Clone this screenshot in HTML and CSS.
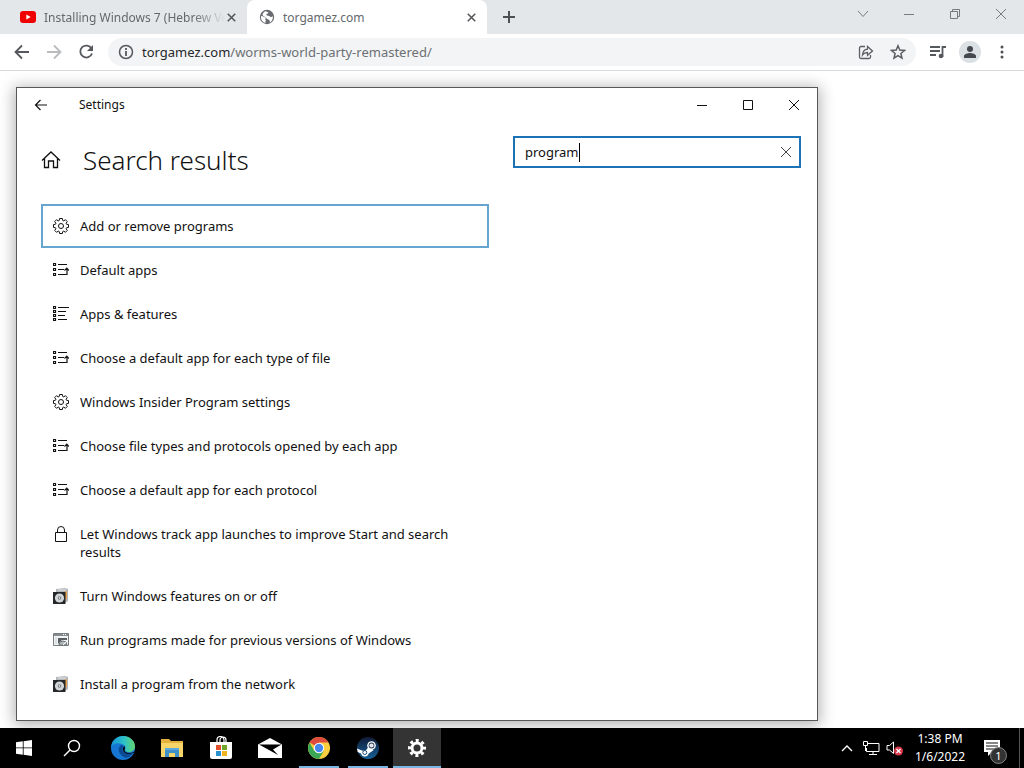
FILE: index.html
```html
<!DOCTYPE html>
<html lang="en">
<head>
<meta charset="utf-8">
<meta name="viewport" content="width=device-width, initial-scale=1">
<title>Settings</title>
<link rel="stylesheet" href="styles.css">
</head>
<body>
<svg class="symbols" aria-hidden="true">
  <symbol id="x" viewBox="0 0 12 12"><path d="M1 1l10 10M11 1L1 11" fill="none" stroke="currentColor"/></symbol>
  <symbol id="gear" viewBox="0 0 16 16"><g fill="none" stroke="currentColor"><path d="M6.600.5h2.800l.3 1.900 1.100.5 1.600-1.200 1.900 1.900-1.200 1.600.5 1.100 1.900.3v2.800l-1.900.3-.5 1.100 1.200 1.600-1.900 1.900-1.600-1.200-1.100.5-.3 1.900H6.600l-.3-1.900-1.100-.5-1.600 1.200-1.900-1.900 1.200-1.600-.5-1.100L.5 9.400V6.600l1.900-.3.5-1.100-1.200-1.600 1.900-1.900 1.600 1.200 1.100-.5z"/><circle cx="8" cy="8" r="2.500"/></g></symbol>
  <symbol id="defaults" viewBox="0 0 16 16"><path d="M.5 1.500h2v2h-2zM.5 6.500h2v2h-2zM.5 11.500h2v2h-2zM5 2.500h9M5 7.500h6M5 12.500h6M11 12.500h3v-6M11.500 8.500l2.300-2.300L16 8.500" fill="none" stroke="currentColor" stroke-width="1.200"/></symbol>
  <symbol id="apps" viewBox="0 0 16 16"><path d="M.5.5h2v2h-2zM.5 4.500h2v2h-2zM.5 8.500h2v2h-2zM.5 12.500h2v2h-2zM5 1.500h11M5 5.500h8M5 9.500h7M5 13.500h9" fill="none" stroke="currentColor" stroke-width="1.200"/></symbol>
  <symbol id="lock" viewBox="0 0 16 16"><path d="M2.500 6.500h11v9h-11zM4.500 6.500V4a3.500 3.500 0 0 1 7 0v2.500" fill="none" stroke="currentColor"/></symbol>
  <symbol id="disc" viewBox="0 0 16 16"><path d="M3 1l9-1 3 1v12l-3 2H3z" fill="#b4b8ba"/><path d="M5 2h8" stroke="#e6e8e8"/><path d="M11 4l3-1v8h-2z" fill="#e7a04d"/><path d="M0 4h12.500v12H0z" fill="#25282a"/><circle cx="6.500" cy="10" r="4.600" fill="#d2d6d8"/><circle cx="6.500" cy="10" r="1.800" fill="#71787c"/><circle cx="6.500" cy="10" r=".8" fill="#fff"/></symbol>
  <symbol id="legacy" viewBox="0 0 16 16"><path d="M.5 1.500h15v12H.5z" fill="#f2f3f3" stroke="#777d80"/><path d="M1 3h14" stroke="#858b8e" stroke-width="2"/><path d="M10 2.500h1m1 0h1" stroke="#fff"/><path d="M3 5v7" stroke="#c8cccc"/><path d="M5 6h9v2H9l-4 4z" fill="#575e61"/><path d="M6 13a4 4 0 0 1 8 0z" fill="#b5babd" stroke="#6f7679"/><path d="M10 13l3-3" stroke="#fff"/></symbol>
</svg>

<header class="browser">
  <div class="tabstrip">
    <div class="tab">
      <svg width="16" height="12" viewBox="0 0 16 12"><rect width="16" height="12" rx="3" fill="#f00000"/><path d="M6.300 3.500v5L10.700 6z" fill="#fff"/></svg>
      <a class="tab-title faded" href="#">Installing Windows 7 (Hebrew Ve</a>
      <button class="tab-close" aria-label="Close tab"><svg width="9" height="9" stroke-width="2"><use href="#x"/></svg></button>
    </div>
    <div class="tab active">
      <svg width="16" height="16" viewBox="0 0 16 16"><circle cx="8" cy="8" r="7.200" fill="#686c70"/><path d="M2 7c2 .2 3 1.200 4.600 1.500.6 1.500-1 1.500.2 2.500l-.5 3C3.500 13 1.500 10.500 2 7zM7 2.200c.8 1.200 2.600.3 2.300 1.600C9 5 7 4.500 7.300 6c.5 1 3 .3 3.700 1.500.7 1 2 .6 2.800-.5.5 3-1 5.500-3 6.500.3-1.600-.3-2.700-1.700-3-1.400-.5-1.600-2-3-2.500C4.500 7.600 3.500 6.500 3.600 5 4.500 3.300 5.500 2.500 7 2.200z" fill="#fff"/></svg>
      <a class="tab-title" href="#">torgamez.com</a>
      <button class="tab-close" aria-label="Close tab"><svg width="9" height="9" stroke-width="2"><use href="#x"/></svg></button>
    </div>
    <button class="new-tab" aria-label="New tab"><svg width="12" height="12" viewBox="0 0 12 12"><path d="M6 0v12M0 6h12" stroke="#4c5054" stroke-width="2"/></svg></button>
    <div class="window-controls pale">
      <button aria-label="Search tabs"><svg width="12" height="12" viewBox="0 0 12 12" fill="none" stroke="currentColor"><path d="M1 3l5 5.500L11 3"/></svg></button>
      <button aria-label="Minimize"><svg width="12" height="12" viewBox="0 0 12 12"><path d="M1 6.500h10" stroke="currentColor"/></svg></button>
      <button aria-label="Restore"><svg width="12" height="12" viewBox="0 0 12 12" fill="none" stroke="currentColor"><path d="M1.500 3.500h7v7h-7zM3.500 3V1.500h7v7H9"/></svg></button>
      <button aria-label="Close"><svg width="12" height="12"><use href="#x"/></svg></button>
    </div>
  </div>
  <div class="toolbar">
    <button class="nav" aria-label="Back"><svg width="16" height="16" viewBox="0 0 16 16" fill="none" stroke="#55585c" stroke-width="1.800"><path d="M15 8H2M8 1.500L1.500 8 8 14.500"/></svg></button>
    <button class="nav" aria-label="Forward"><svg width="16" height="16" viewBox="0 0 16 16" fill="none" stroke="#b9bbbd" stroke-width="1.800"><path d="M1 8h13M8 1.500L14.500 8 8 14.500"/></svg></button>
    <button class="nav" aria-label="Reload"><svg width="16" height="16" viewBox="0 0 16 16"><path d="M13.500 4.500A6 6 0 1 0 14 9.500" fill="none" stroke="#55585c" stroke-width="1.800"/><path d="M15 1v6H9z" fill="#55585c"/></svg></button>
    <div class="omnibox">
      <svg width="16" height="16" viewBox="0 0 16 16"><circle cx="8" cy="8" r="6.500" fill="none" stroke="#55595d" stroke-width="1.500"/><path d="M8 4v2M8 7v5" stroke="#55595d" stroke-width="1.800"/></svg>
      <a class="url" href="#"><span class="host">torgamez.com</span>/worms-world-party-remastered/</a>
      <button class="tool" aria-label="Share"><svg width="16" height="16" viewBox="0 0 16 16" fill="none" stroke="#5b5f63" stroke-width="1.300"><path d="M7 2.500H3a1.500 1.500 0 0 0-1.500 1.500v9A1.500 1.500 0 0 0 3 14.500h8a1.500 1.500 0 0 0 1.500-1.500v-2M4.500 11c.3-3.800 2-5.600 5-5.800V2.500L14.500 7l-5 4.300V8.500c-2.200 0-3.800.7-5 2.500z"/></svg></button>
      <button class="tool" aria-label="Bookmark"><svg width="16" height="16" viewBox="0 0 16 16" fill="none" stroke="#5b5f63" stroke-width="1.500"><path d="M8 1.800l1.800 4.300 4.700.4-3.600 3 1.100 4.600L8 11.600l-4 2.500 1.100-4.600-3.600-3 4.700-.4z"/></svg></button>
    </div>
    <button class="tool" aria-label="Media controls"><svg width="18" height="16" viewBox="0 0 18 16"><path d="M1 3h10M1 7h10M1 11h6M13.500 13V3H17" fill="none" stroke="#55595d" stroke-width="1.800"/><circle cx="12" cy="12" r="2.300" fill="#55595d"/></svg></button>
    <button class="tool avatar" aria-label="Profile"><svg width="14" height="14" viewBox="0 0 14 14" fill="#45494f"><circle cx="7" cy="4" r="3"/><path d="M1 13v-2c0-2 4-3 6-3s6 1 6 3v2z"/></svg></button>
    <button class="tool" aria-label="Menu"><svg width="4" height="14" viewBox="0 0 4 14" fill="#4c5054"><circle cx="2" cy="2" r="1.500"/><circle cx="2" cy="7" r="1.500"/><circle cx="2" cy="12" r="1.500"/></svg></button>
  </div>
</header>

<main class="page">
  <section class="settings">
    <div class="titlebar">
      <button class="back" aria-label="Back"><svg width="14" height="12" viewBox="0 0 14 12" fill="none" stroke="currentColor" stroke-width="1.200"><path d="M13 6H1.500M6.500 1l-5 5 5 5"/></svg></button>
      <span class="caption">Settings</span>
      <div class="window-controls">
        <button aria-label="Minimize"><svg width="12" height="12" viewBox="0 0 12 12"><path d="M1 6.500h10" stroke="currentColor"/></svg></button>
        <button aria-label="Maximize"><svg width="12" height="12" viewBox="0 0 12 12"><path d="M1.500 1.500h9v9h-9z" fill="none" stroke="currentColor"/></svg></button>
        <button aria-label="Close"><svg width="12" height="12"><use href="#x"/></svg></button>
      </div>
    </div>
    <div class="content">
      <div class="results">
        <div class="heading">
          <button class="home" aria-label="Home"><svg width="20" height="20" viewBox="0 0 20 20" fill="none" stroke="currentColor" stroke-width="1.300"><path d="M1 10.500L10 2l9 8.500M3.500 8.500v9h4V11h5v6.500h4v-9"/></svg></button>
          <h1>Search results</h1>
        </div>
        <ul class="list">
          <li><a class="selected" href="#"><svg class="ic"><use href="#gear"/></svg><span>Add or remove programs</span></a></li>
          <li><a href="#"><svg class="ic"><use href="#defaults"/></svg><span>Default apps</span></a></li>
          <li><a href="#"><svg class="ic"><use href="#apps"/></svg><span>Apps &amp; features</span></a></li>
          <li><a href="#"><svg class="ic"><use href="#defaults"/></svg><span>Choose a default app for each type of file</span></a></li>
          <li><a href="#"><svg class="ic"><use href="#gear"/></svg><span>Windows Insider Program settings</span></a></li>
          <li><a href="#"><svg class="ic"><use href="#defaults"/></svg><span>Choose file types and protocols opened by each app</span></a></li>
          <li><a href="#"><svg class="ic"><use href="#defaults"/></svg><span>Choose a default app for each protocol</span></a></li>
          <li><a href="#"><svg class="ic"><use href="#lock"/></svg><span>Let Windows track app launches to improve Start and search results</span></a></li>
          <li><a href="#"><svg class="ic"><use href="#disc"/></svg><span>Turn Windows features on or off</span></a></li>
          <li><a href="#"><svg class="ic"><use href="#legacy"/></svg><span>Run programs made for previous versions of Windows</span></a></li>
          <li><a href="#"><svg class="ic"><use href="#disc"/></svg><span>Install a program from the network</span></a></li>
        </ul>
      </div>
      <div class="search">
        <input type="text" value="program" aria-label="Find a setting">
        <span class="caret"></span>
        <button class="clear" aria-label="Clear"><svg width="12" height="12"><use href="#x"/></svg></button>
      </div>
    </div>
  </section>
</main>

<footer class="taskbar">
  <button class="start" aria-label="Start"><svg width="16" height="16" viewBox="0 0 16 16" fill="#fff"><path d="M0 2.300L6.800 1.300v6.200H0zM7.600 1.200L16 0v7.500H7.600zM0 8.300h6.800v6.400L0 13.700zM7.600 8.300H16V16l-8.400-1.200z"/></svg></button>
  <nav class="apps" aria-label="Apps">
    <button class="find" aria-label="Search"><svg width="18" height="18" viewBox="0 0 18 18" fill="none" stroke="#fff" stroke-width="1.400"><circle cx="11" cy="7" r="5.500"/><path d="M7 11l-6 6"/></svg></button>
    <button aria-label="Edge"><svg width="24" height="24" viewBox="0 0 24 24"><defs><linearGradient id="eg" x1="0" x2="1"><stop offset="0" stop-color="#1594d6"/><stop offset=".55" stop-color="#2dc2c8"/><stop offset="1" stop-color="#63d66d"/></linearGradient></defs><circle cx="12" cy="12" r="12" fill="#1677d2"/><path d="M0 11C1 4 6 0 12 0c7 0 12 5 12 10 0 4-3 6-6 6-3 0-4-1-4-2 1-1 1-5-3-6C7 6.500 2 7.500 0 11z" fill="url(#eg)"/><path d="M10 9c-4 3-3 10 5 13 4-1 6-3 7.500-5.500-3 1.500-8 1.500-10-1.500-1.300-2-1-4 0-5z" fill="#0b4a94"/><path d="M13.500 10c-1.500 1-2 3-1 5 1.500 3 6.500 3.500 9 2l2.500-.5v-1c-2 1-4 1.500-6 1.500-3 0-4.500-1.500-4.500-3 .7-1 .5-3 0-4z" fill="#000"/></svg></button>
    <button aria-label="File Explorer"><svg width="22" height="18" viewBox="0 0 22 18"><path d="M0 0h8l2 2h12v16H0z" fill="#e6b23f"/><path d="M0 4h22v14H0z" fill="#f8d568"/><path d="M4 9h14v9h-4v-4H8v4H4z" fill="#3f8fc9"/><path d="M4 9h14v2H4z" fill="#5cabdc"/></svg></button>
    <button aria-label="Microsoft Store"><svg width="24" height="24" viewBox="0 0 24 24"><path d="M8 8V4a3.500 3.500 0 0 1 7 0v4M11 6V4a3 3 0 0 1 6 0v2" fill="none" stroke="#fff" stroke-width="1.200"/><path d="M1 6h22v15a2 2 0 0 1-2 2H3a2 2 0 0 1-2-2z" fill="#fff"/><path d="M7 9h5v5H7z" fill="#e2512a"/><path d="M13 9h5v5h-5z" fill="#72a52c"/><path d="M7 15h5v5H7z" fill="#2a91cf"/><path d="M13 15h5v5h-5z" fill="#efb51f"/></svg></button>
    <button aria-label="Mail"><svg width="24" height="20" viewBox="0 0 24 20"><path d="M0 6.500L12 0l12 6.500V20H0z" fill="#fff"/><path d="M1 6.500h22.500L15 11.500 20 17 1 6.500z" fill="#000"/></svg></button>
    <button class="open" aria-label="Chrome"><svg width="22" height="22" viewBox="0 0 22 22"><circle cx="11" cy="11" r="11" fill="#f9cf3f"/><path d="M11 11L1.500 5.500A11 11 0 0 1 20.500 5.500H11z" fill="#df4b3c"/><path d="M1.500 5.500A11 11 0 0 0 11 22l4.800-8.300L11 11l-4.800 2.700z" fill="#3aa757"/><circle cx="11" cy="11" r="5.200" fill="#fff"/><circle cx="11" cy="11" r="4.200" fill="#4687ef"/></svg></button>
    <button class="open" aria-label="Steam"><svg width="22" height="22" viewBox="0 0 22 22"><defs><linearGradient id="sg" x1="0" y1="0" x2="0" y2="1"><stop offset="0" stop-color="#111b37"/><stop offset="1" stop-color="#176098"/></linearGradient></defs><circle cx="11" cy="11" r="11" fill="url(#sg)"/><path d="M0 11.500l5.500 2.200 3.500-.5 3-4 4.500 4-4.800 3.300A4 4 0 0 1 4 16.500L.7 15z" fill="#fff"/><circle cx="14.500" cy="8.500" r="4.300" fill="#fff"/><circle cx="14.500" cy="8.500" r="2.900" fill="#24395c"/><circle cx="14.500" cy="8.500" r="2.100" fill="#e6e8ec"/><circle cx="7.800" cy="15.500" r="2" fill="none" stroke="#1b4c7d"/></svg></button>
    <button class="open current" aria-label="Settings"><svg width="18" height="18" viewBox="0 0 18 18"><g fill="none" stroke="#fff"><circle cx="9" cy="9" r="5" stroke-width="3"/><circle cx="9" cy="9" r="7.500" stroke-width="3" stroke-dasharray="3 2.890" stroke-dashoffset="1.500"/></g></svg></button>
  </nav>
  <div class="tray">
    <button aria-label="Show hidden icons"><svg width="12" height="8" viewBox="0 0 12 8"><path d="M1 7l5-5 5 5" fill="none" stroke="#fff" stroke-width="1.400"/></svg></button>
    <button aria-label="Network"><svg width="17" height="14" viewBox="0 0 17 14"><path d="M5 2.500h11v8H3.500V7M10 11v2.500M6 13.500h8M.5.500h4v4h-4zM2.500 5v5" fill="none" stroke="#fff"/></svg></button>
    <button aria-label="Volume muted"><svg width="18" height="16" viewBox="0 0 18 16"><path d="M1 5.500h2.500L7.500 2v11.500L3.500 10H1z" fill="none" stroke="#fff"/><circle cx="12.500" cy="11" r="4.500" fill="#d93648"/><path d="M10.500 9l4 4M14.500 9l-4 4" stroke="#fff" stroke-width="1.300"/></svg></button>
    <button class="clock"><time>1:38 PM</time><time>1/6/2022</time></button>
    <button class="notices" aria-label="Notifications"><svg width="18" height="18" viewBox="0 0 18 18"><path d="M1 1h16v12h-8l-4 4v-4H1z" fill="#fff"/><path d="M3 4h12M3 7h12M3 10h8" stroke="#111"/></svg><span class="badge">1</span></button>
    <button class="desktop" aria-label="Show desktop"></button>
  </div>
</footer>
</body>
</html>
```
FILE: styles.css
```css
* { box-sizing: border-box; }

body {
  margin: 0;
  min-height: 100vh;
  display: flex;
  flex-direction: column;
  background: #fff;
  color: #111;
  font-family: "Noto Sans", "Open Sans", sans-serif;
  font-size: 13px;
}

button {
  display: flex;
  align-items: center;
  justify-content: center;
  padding: 0;
  border: 0;
  background: none;
  color: inherit;
  font: inherit;
}

a { color: inherit; text-decoration: none; }
svg { flex: none; display: block; }
.symbols { width: 0; height: 0; position: absolute; }

/* Browser chrome */
.tabstrip {
  display: flex;
  height: 34px;
  background: #e4e7ea;
  color: #64686c;
}
.tab {
  display: flex;
  align-items: center;
  width: 240px;
  padding: 0 10px 0 12px;
  font-size: 12px;
}
.tab:first-child { width: 247px; padding-left: 20px; }
.tab.active { background: #fff; border-radius: 8px 8px 0 0; }
.tab-title { flex: 1; margin-left: 8px; overflow: hidden; white-space: nowrap; }
.faded {
  -webkit-mask-image: linear-gradient(to left, transparent, #000 32px);
  mask-image: linear-gradient(to left, transparent, #000 32px);
}
.tab-close { width: 12px; height: 16px; color: #505458; }
.new-tab { width: 44px; }
.window-controls { display: flex; margin-left: auto; }
.window-controls button { width: 46px; }
.pale { height: 28px; color: #777b7f; }

.toolbar {
  display: flex;
  align-items: center;
  height: 37px;
  padding: 0 6px;
  border-bottom: 1px solid #d9dadc;
}
.nav { width: 32px; height: 32px; }
.omnibox {
  flex: 1;
  display: flex;
  align-items: center;
  height: 28px;
  margin: 0 6px;
  padding: 0 2px 0 10px;
  border-radius: 14px;
  background: #f2f4f5;
}
.url { flex: 1; margin-left: 8px; font-size: 13px; color: #6c7074; }
.host { color: #26282b; }
.tool { width: 32px; height: 28px; }
.avatar { width: 22px; height: 22px; margin: 0 5px; border-radius: 50%; background: #dbe0e5; }

/* Settings window */
.page { flex: 1; padding: 16px 16px 7px; background: #fff; }
.settings {
  width: 81%;
  max-width: 802px;
  border: 1px solid #56585a;
  background: #fff;
  box-shadow: 0 2px 14px 2px rgba(0, 0, 0, .3);
}
.titlebar { display: flex; height: 33px; }
.back { width: 48px; }
.caption { margin-left: 14px; font-size: 12px; line-height: 34px; }
.content {
  display: grid;
  grid-template-columns: 448fr 288fr;
  align-items: start;
  gap: 24px;
  padding: 15px 16px 14px 24px;
}
.heading { display: flex; align-items: center; gap: 22px; height: 48px; margin-bottom: 20px; }
.home { width: 20px; height: 20px; }
h1 { margin: 0; font-size: 26px; line-height: 36px; font-weight: 300; }
.list { margin: 0; padding: 0; list-style: none; }
.list a {
  display: flex;
  gap: 11px;
  padding: 11px 10px;
  border: 2px solid transparent;
  font-size: 13px;
  line-height: 18px;
}
.list .selected { border-color: #66a5cf; }
.ic { width: 16px; height: 16px; margin-top: 1px; }
.search {
  display: flex;
  align-items: center;
  height: 32px;
  padding-left: 10px;
  border: 2px solid #1b72b4;
}
.search input {
  field-sizing: content;
  min-width: 0;
  padding: 0;
  border: 0;
  outline: 0;
  background: none;
  color: #111;
  font-family: inherit;
  font-size: 13px;
}
.caret { width: 1px; height: 19px; background: #000; }
.clear { width: 26px; height: 28px; margin-left: auto; color: #444; }

/* Taskbar */
.taskbar { display: flex; height: 40px; background: #000; color: #fff; }
.start, .apps button { width: 48px; height: 40px; }
.apps { display: flex; gap: 1px; }
.apps .find { margin-right: 2px; }
.open {
  background: linear-gradient(#7ab6e2, #7ab6e2) center bottom / 40px 2px no-repeat;
}
.current { background-color: #343434; background-size: 100% 2px; }
.tray { display: flex; margin-left: auto; }
.tray button { width: 24px; }
.tray .clock {
  flex-direction: column;
  width: 66px;
  font-size: 12px;
  line-height: 18px;
}
.tray .notices { position: relative; width: 46px; padding-right: 9px; }
.badge {
  position: absolute;
  right: 12px;
  bottom: 4px;
  width: 17px;
  height: 17px;
  border: 1px solid #858585;
  border-radius: 50%;
  background: #333;
  font-size: 11px;
  line-height: 15px;
}
.tray .desktop { width: 5px; border-left: 1px solid #555; }
```
